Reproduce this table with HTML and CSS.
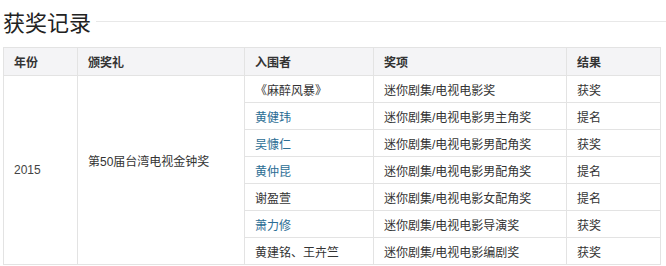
FILE: index.html
```html
<!DOCTYPE html>
<html lang="zh">
<head>
<meta charset="utf-8">
<link rel="stylesheet" href="styles.css">
</head>
<body>
<div class="page">
  <div class="title-row">
    <h2 class="title">获奖记录</h2>
    <div class="title-line"></div>
  </div>
  <table class="awards">
    <colgroup>
      <col class="c-year"><col class="c-event"><col class="c-name"><col class="c-prize"><col class="c-result">
    </colgroup>
    <thead>
      <tr><th>年份</th><th>颁奖礼</th><th>入围者</th><th>奖项</th><th>结果</th></tr>
    </thead>
    <tbody>
      <tr>
        <td rowspan="7" class="year">2015</td>
        <td rowspan="7" class="event">第50届台湾电视金钟奖</td>
        <td>《麻醉风暴》</td><td>迷你剧集/电视电影奖</td><td>获奖</td>
      </tr>
      <tr><td><span class="link">黄健玮</span></td><td>迷你剧集/电视电影男主角奖</td><td>提名</td></tr>
      <tr><td><span class="link">吴慷仁</span></td><td>迷你剧集/电视电影男配角奖</td><td>获奖</td></tr>
      <tr><td><span class="link">黄仲昆</span></td><td>迷你剧集/电视电影男配角奖</td><td>提名</td></tr>
      <tr><td>谢盈萱</td><td>迷你剧集/电视电影女配角奖</td><td>提名</td></tr>
      <tr><td><span class="link">萧力修</span></td><td>迷你剧集/电视电影导演奖</td><td>获奖</td></tr>
      <tr><td>黄建铭、王卉竺</td><td>迷你剧集/电视电影编剧奖</td><td>获奖</td></tr>
    </tbody>
  </table>
</div>
</body>
</html>
```

FILE: styles.css
```css
html, body {
  margin: 0;
  padding: 0;
  background: #ffffff;
}
body {
  font-family: "Liberation Sans", "Noto Sans CJK SC", sans-serif;
  color: #333333;
}
.page {
  padding: 9px 0 0 3px;
}
.title-row {
  display: flex;
  align-items: center;
  height: 24px;
}
.title {
  margin: 0;
  font-size: 22px;
  font-weight: normal;
  line-height: 24px;
  color: #222222;
  font-family: "Noto Sans CJK SC", sans-serif;
}
.title-line {
  flex: 1;
  height: 1px;
  background: #e8e8e8;
  margin-left: 5px;
}
.awards {
  margin-top: 14px;
  border-collapse: collapse;
  table-layout: fixed;
  width: 657px;
  font-size: 12px;
}
.c-year { width: 74px; }
.c-event { width: 167px; }
.c-name { width: 129px; }
.c-prize { width: 193px; }
.c-result { width: 94px; }
.awards th, .awards td {
  border: 1px solid #e3e3e3;
  padding: 0 10px;
  text-align: left;
  white-space: nowrap;
}
.awards th {
  height: 27px;
  background: #f4f4f6;
  font-weight: bold;
  color: #333333;
}
.awards td {
  height: 26px;
}
.awards td.year {
  vertical-align: middle;
  color: #444444;
}
.awards td.event {
  vertical-align: middle;
  padding-bottom: 20px;
}
.link {
  color: #2b6d94;
}
```
